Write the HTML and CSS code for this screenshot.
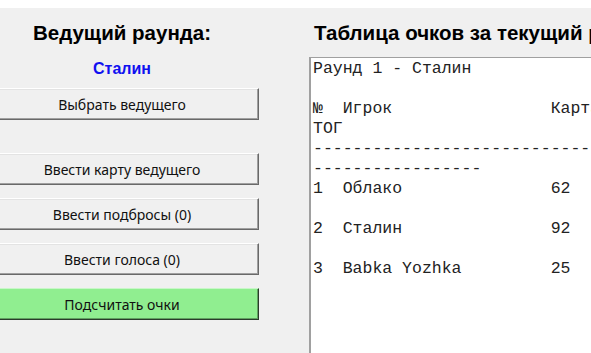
FILE: index.html
```html
<!DOCTYPE html>
<html lang="ru">
<head>
    <meta charset="UTF-8">
    <title>Раунд</title>
    <link rel="stylesheet" href="styles.css">
</head>
<body>
<div class="app">
    <div class="left">
        <h2>Ведущий раунда:</h2>
        <div class="leader">Сталин</div>
        <button class="btn">Выбрать ведущего</button>
        <div class="actions">
            <button class="btn">Ввести карту ведущего</button>
            <button class="btn">Ввести подбросы (0)</button>
            <button class="btn">Ввести голоса (0)</button>
            <button class="btn count">Подсчитать очки</button>
        </div>
    </div>
    <div class="right">
        <h2>Таблица очков за текущий раунд</h2>
        <pre class="scores">Раунд 1 - Сталин

№  Игрок                Карта  Подбросы  Голоса  И
ТОГ
------------------------------------------------------
-----------------
1  Облако               62     0         0       0

2  Сталин               92     0         0       0

3  Babka Yozhka         25     0         0       0</pre>
    </div>
</div>
</body>
</html>
```

FILE: styles.css
```css
html, body {
    margin: 0;
    height: 100%;
    overflow: hidden;
    background: #fff;
}

.app {
    margin-top: 8px;
    height: 100%;
    background: #f0f0f0;
    display: flex;
    gap: 50px;
}

h2 {
    font-family: "Liberation Sans", Arial, sans-serif;
    font-size: 20.5px;
    font-weight: bold;
    line-height: 24px;
    margin: 0;
    color: #000;
    white-space: nowrap;
}

.left {
    width: 274px;
    flex: none;
    margin-left: -15px;
    padding-top: 13px;
    display: flex;
    flex-direction: column;
    align-items: center;
}

.leader {
    font-family: "Liberation Sans", Arial, sans-serif;
    font-size: 16px;
    font-weight: bold;
    line-height: 20px;
    color: #1010f0;
    margin-top: 14px;
    margin-bottom: 9px;
}

.actions {
    width: 100%;
    margin-top: 33px;
    display: flex;
    flex-direction: column;
    gap: 13px;
}

.btn {
    width: 100%;
    height: 32px;
    font-family: "Noto Sans", "Segoe UI", sans-serif;
    font-size: 14px;
    color: #111;
    background: #f0f0f0;
    border: 1px solid;
    border-color: #fff #696969 #696969 #fff;
    box-shadow: inset -1px -1px 0 #a0a0a0, inset 1px 1px 0 #e3e3e3;
    padding: 0;
}

.btn.count {
    background: #90ee90;
    border-color: #c8f7c8 #2b3b2b #2b3b2b #c8f7c8;
    box-shadow: inset -1px -1px 0 #60a060;
}

.right {
    flex: none;
    padding-top: 13px;
}

.right h2 {
    margin-left: 5px;
}

.scores {
    margin: 12px 0 0;
    width: 700px;
    height: 400px;
    background: #fff;
    border-left: 2px solid #a0a0a0;
    border-top: 1px solid #a0a0a0;
    padding: 1px 0 0 2px;
    font-family: "Liberation Mono", "Courier New", monospace;
    font-size: 16.5px;
    line-height: 20px;
    color: #222;
}
```
